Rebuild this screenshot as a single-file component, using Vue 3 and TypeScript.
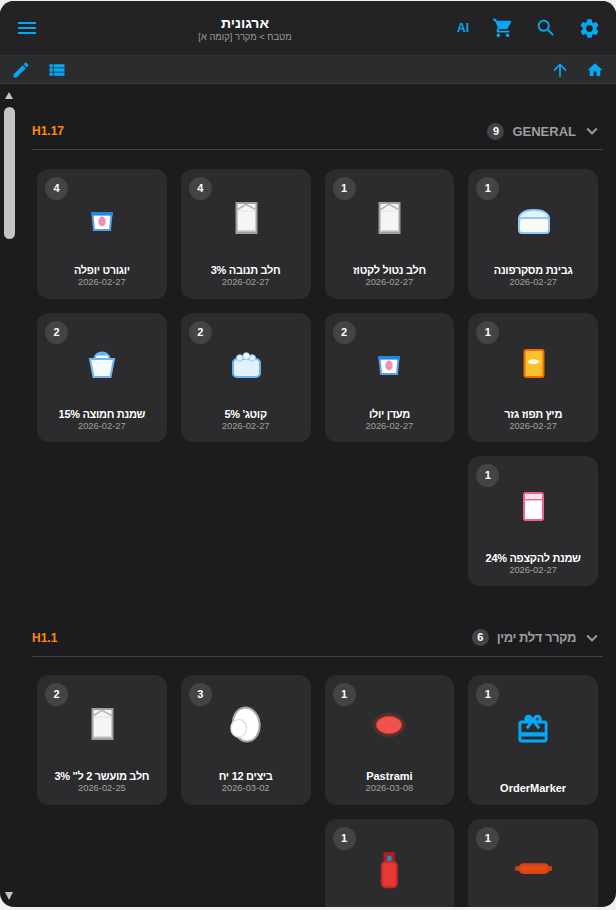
<script setup lang="ts">
interface Item {
  name: string
  date?: string
  count: number
  icon: string
}

interface Section {
  code: string
  title: string
  count: number
  items: Item[]
}

const sections: Section[] = [
  {
    code: 'H1.17',
    title: 'GENERAL',
    count: 9,
    items: [
      { name: 'גבינת מסקרפונה', date: '2026-02-27', count: 1, icon: 'cheese' },
      { name: 'חלב נטול לקטוז', date: '2026-02-27', count: 1, icon: 'milk' },
      { name: 'חלב תנובה 3%', date: '2026-02-27', count: 4, icon: 'milk' },
      { name: 'יוגורט יופלה', date: '2026-02-27', count: 4, icon: 'yogurt' },
      { name: 'מיץ תפוז גזר', date: '2026-02-27', count: 1, icon: 'juice' },
      { name: 'מעדן יולו', date: '2026-02-27', count: 2, icon: 'yogurt' },
      { name: "קוטג' 5%", date: '2026-02-27', count: 2, icon: 'cottage' },
      { name: 'שמנת חמוצה 15%', date: '2026-02-27', count: 2, icon: 'sour' },
      { name: 'שמנת להקצפה 24%', date: '2026-02-27', count: 1, icon: 'cream' },
    ],
  },
  {
    code: 'H1.1',
    title: 'מקרר דלת ימין',
    count: 6,
    items: [
      { name: 'OrderMarker', count: 1, icon: 'gift' },
      { name: 'Pastrami', date: '2026-03-08', count: 1, icon: 'pastrami' },
      { name: 'ביצים 12 יח', date: '2026-03-02', count: 3, icon: 'egg' },
      { name: 'חלב מועשר 2 ל" 3%', date: '2026-02-25', count: 2, icon: 'milk' },
      { name: '', count: 1, icon: 'sausage' },
      { name: '', count: 1, icon: 'bottle' },
    ],
  },
]

function isHebrew(text: string) {
  return /[\u0590-\u05ff]/.test(text)
}
</script>

<template>
  <div class="frame" dir="rtl">
    <header class="top-bar">
      <button class="icon-btn">
        <svg width="23" height="23" viewBox="0 0 24 24"><path d="M19.14 12.94c.04-.3.06-.61.06-.94 0-.32-.02-.64-.07-.94l2.03-1.58c.18-.14.23-.41.12-.61l-1.92-3.32c-.12-.22-.37-.29-.59-.22l-2.39.96c-.5-.38-1.03-.7-1.62-.94l-.36-2.54c-.04-.24-.24-.41-.48-.41h-3.84c-.24 0-.43.17-.47.41l-.36 2.54c-.59.24-1.13.57-1.62.94l-2.39-.96c-.22-.08-.47 0-.59.22L2.74 8.87c-.12.21-.08.47.12.61l2.03 1.58c-.05.3-.09.63-.09.94s.02.64.07.94l-2.03 1.58c-.18.14-.23.41-.12.61l1.92 3.32c.12.22.37.29.59.22l2.39-.96c.5.38 1.03.7 1.62.94l.36 2.54c.05.24.24.41.48.41h3.84c.24 0 .44-.17.47-.41l.36-2.54c.59-.24 1.13-.56 1.62-.94l2.39.96c.22.08.47 0 .59-.22l1.92-3.32c.12-.22.07-.47-.12-.61l-2.01-1.58zM12 15.6c-1.98 0-3.6-1.62-3.6-3.6s1.62-3.6 3.6-3.6 3.6 1.62 3.6 3.6-1.62 3.6-3.6 3.6z" /></svg>
      </button>
      <button class="icon-btn">
        <svg width="22" height="22" viewBox="0 0 24 24"><path d="M15.5 14h-.79l-.28-.27C15.41 12.59 16 11.11 16 9.5 16 5.91 13.09 3 9.5 3S3 5.91 3 9.5 5.91 16 9.5 16c1.61 0 3.09-.59 4.23-1.57l.27.28v.79l5 4.99L20.49 19l-4.99-5zm-6 0C7.01 14 5 11.99 5 9.5S7.01 5 9.5 5 14 7.01 14 9.5 11.99 14 9.5 14z" /></svg>
      </button>
      <button class="icon-btn">
        <svg width="22" height="22" viewBox="0 0 24 24"><path d="M7 18c-1.1 0-1.99.9-1.99 2S5.9 22 7 22s2-.9 2-2-.9-2-2-2zM1 2v2h2l3.6 7.59-1.35 2.45c-.16.28-.25.61-.25.96 0 1.1.9 2 2 2h12v-2H7.42c-.14 0-.25-.11-.25-.25l.03-.12.9-1.63h7.45c.75 0 1.41-.41 1.75-1.03l3.58-6.47c.08-.14.12-.31.12-.48 0-.55-.45-1-1-1H5.21l-.94-2H1zm16 16c-1.1 0-1.99.9-1.99 2s.89 2 1.99 2 2-.9 2-2-.9-2-2-2z" /></svg>
      </button>
      <button class="icon-btn ai-btn">AI</button>
      <div class="title-block">
        <div class="title">ארגונית</div>
        <div class="subtitle">מטבח &gt; מקרר [קומה א]</div>
      </div>
      <button class="icon-btn">
        <svg width="24" height="24" viewBox="0 0 24 24"><path d="M3 18h18v-2H3v2zm0-5h18v-2H3v2zm0-7v2h18V6H3z" /></svg>
      </button>
    </header>

    <div class="tool-bar">
      <button class="icon-btn tool-btn">
        <svg width="18" height="18" viewBox="0 0 24 24"><path d="M10 20v-6h4v6h5v-8h3L12 3 2 12h3v8z" /></svg>
      </button>
      <button class="icon-btn tool-btn">
        <svg width="20" height="20" viewBox="0 0 24 24"><path d="M4 12l1.41 1.41L11 7.83V20h2V7.83l5.58 5.59L20 12l-8-8-8 8z" /></svg>
      </button>
      <div class="spacer"></div>
      <button class="icon-btn tool-btn">
        <svg width="20" height="20" viewBox="0 0 24 24"><path d="M3 14h4v-4H3v4zm0 5h4v-4H3v4zM3 9h4V5H3v4zm5 5h13v-4H8v4zm0 5h13v-4H8v4zM8 5v4h13V5H8z" /></svg>
      </button>
      <button class="icon-btn tool-btn">
        <svg width="20" height="20" viewBox="0 0 24 24"><path d="M3 17.25V21h3.75L17.81 9.94l-3.75-3.75L3 17.25zM20.71 7.04c.39-.39.39-1.02 0-1.41l-2.34-2.34c-.39-.39-1.02-.39-1.41 0l-1.83 1.83 3.75 3.75 1.83-1.83z" /></svg>
      </button>
    </div>

    <div class="main">
      <main class="content">
        <section v-for="section in sections" :key="section.code" class="section">
          <div class="section-head">
            <svg class="chevron" width="22" height="22" viewBox="0 0 24 24"><path d="M16.59 8.59L12 13.17 7.41 8.59 6 10l6 6 6-6z" /></svg>
            <span class="section-title" :class="{ he: isHebrew(section.title) }">{{ section.title }}</span>
            <span class="section-count">{{ section.count }}</span>
            <span class="section-code">{{ section.code }}</span>
          </div>

          <div class="grid">
            <div v-for="(item, i) in section.items" :key="i" class="card">
              <span class="badge">{{ item.count }}</span>

              <svg class="art" width="48" height="48" viewBox="0 0 48 48">
                <g v-if="item.icon === 'milk'">
                  <rect x="14.5" y="9" width="20" height="30" fill="#f5f5f5" stroke="#a0a0a0" stroke-width="2" />
                  <path d="M15.5 15.5l8.500-5.200 9.500 5.200" fill="none" stroke="#b5b5b5" stroke-width="1.600" />
                  <rect x="15.5" y="16.500" width="18" height="1" fill="#e4e4e4" />
                  <rect x="15.5" y="36.500" width="18" height="1.500" fill="#bdbdbd" />
                </g>
                <g v-else-if="item.icon === 'yogurt'">
                  <path d="M14.5 20h19l-1.5 16h-16z" fill="#fff" stroke="#5a9fe6" stroke-width="2" />
                  <rect x="13" y="18" width="22" height="3.6" fill="#1e88e5" />
                  <ellipse cx="24" cy="27.5" rx="3.6" ry="5" fill="#f48fb1" />
                </g>
                <g v-else-if="item.icon === 'cheese'">
                  <path d="M10 25c0-6 6.500-9 15-9s15 3 15 9z" fill="#e3f2fd" stroke="#90caf9" stroke-width="2" />
                  <rect x="10" y="24" width="30" height="15" rx="3" fill="#fafafa" stroke="#90caf9" stroke-width="2" />
                </g>
                <g v-else-if="item.icon === 'juice'">
                  <rect x="15.500" y="12" width="19" height="27" rx="2" fill="#fbc02d" stroke="#ef6c00" stroke-width="2" />
                  <ellipse cx="24.500" cy="23.700" rx="5.500" ry="2.500" fill="#fff8e1" />
                </g>
                <g v-else-if="item.icon === 'cottage'">
                  <rect x="11" y="21" width="27" height="18" rx="4" fill="#e3f2fd" stroke="#64b5f6" stroke-width="2" />
                  <circle cx="17.800" cy="20" r="3.300" fill="#e3f2fd" stroke="#90caf9" />
                  <circle cx="30.200" cy="20" r="3.300" fill="#e3f2fd" stroke="#90caf9" />
                  <circle cx="24.300" cy="18.200" r="3.500" fill="#f5faff" stroke="#90caf9" />
                </g>
                <g v-else-if="item.icon === 'sour'">
                  <path d="M16.500 21c0-4 3.500-6.500 7.500-6.500s7.500 2.500 7.500 6.500z" fill="#f5faff" stroke="#64b5f6" stroke-width="2" />
                  <path d="M17.500 17.500c1.500-2 3.800-3 6.500-3s5 1 6.500 3z" fill="#64b5f6" />
                  <path d="M12 21h24l-3.500 18h-17z" fill="#f5faff" stroke="#74b4ee" stroke-width="2" />
                </g>
                <g v-else-if="item.icon === 'cream'">
                  <rect x="15" y="12" width="19" height="27" rx="2" fill="#fff" stroke="#f06292" stroke-width="2" />
                  <rect x="16" y="13" width="17" height="5" fill="#fce4ec" />
                  <rect x="16" y="18" width="17" height="1.400" fill="#f06292" />
                </g>
                <g v-else-if="item.icon === 'gift'" transform="translate(6.500 11.800) scale(1.458)" fill="#03a9f4">
                  <path d="M20 6h-2.180c.11-.31.180-.650.180-1 0-1.660-1.340-3-3-3-1.050 0-1.960.540-2.500 1.350l-.5.670-.5-.680C10.960 2.540 10.050 2 9 2 7.340 2 6 3.340 6 5c0 .350.070.690.180 1H4c-1.110 0-1.990.890-1.990 2L2 19c0 1.110.890 2 2 2h16c1.110 0 2-.890 2-2V8c0-1.110-.890-2-2-2zm-5-2c.550 0 1 .450 1 1s-.450 1-1 1-1-.450-1-1 .450-1 1-1zM20 19H4v-2h16v2zm0-5H4V8h5.080L7 10.830 8.620 12 11 8.760l1-1.360 1 1.360L15.380 12 17 10.830 14.920 8H20v6z" />
                  <circle cx="9" cy="5" r="1.400" />
                </g>
                <g v-else-if="item.icon === 'pastrami'">
                  <ellipse cx="24" cy="25" rx="16.500" ry="12.500" fill="#4b302e" />
                  <ellipse cx="24" cy="25" rx="12.800" ry="8.700" fill="#ef5350" stroke="#d32f2f" />
                </g>
                <g v-else-if="item.icon === 'egg'">
                  <ellipse cx="24.200" cy="24.500" rx="13.400" ry="17" fill="#fff" stroke="#a8a8a8" stroke-width="2" transform="rotate(-8 24.200 24.500)" />
                  <ellipse cx="16.800" cy="28.300" rx="7.800" ry="8.800" fill="#fff" stroke="#e0e0e0" stroke-width="1.500" />
                </g>
                <g v-else-if="item.icon === 'sausage'">
                  <rect x="6.300" y="22.200" width="36.700" height="4.600" fill="#c84312" />
                  <rect x="9.500" y="19.300" width="31" height="10.700" rx="5" fill="#d84315" />
                  <rect x="12" y="22" width="26" height="5" rx="2.500" fill="#e64a19" />
                </g>
                <g v-else-if="item.icon === 'bottle'">
                  <rect x="18.500" y="8.300" width="11.300" height="10" fill="#b71c1c" />
                  <rect x="22.200" y="11.700" width="4.300" height="6" fill="#039be5" />
                  <rect x="16.800" y="17.700" width="15" height="25.600" rx="4" fill="#e53935" stroke="#c62828" stroke-width="2" />
                </g>
              </svg>

              <div v-if="item.name" class="card-text">
                <div class="card-name" :class="{ he: isHebrew(item.name) }">{{ item.name }}</div>
                <div v-if="item.date" class="card-date">{{ item.date }}</div>
              </div>
            </div>
          </div>
        </section>
      </main>

      <div class="scrollbar">
        <span class="arrow-up"></span>
        <span class="thumb"></span>
        <span class="arrow-down"></span>
      </div>
    </div>
  </div>
</template>

<style>
html,
body {
  background: #f0f0f0;
  overflow: hidden;
}
</style>

<style scoped>
.frame {
  box-sizing: border-box;
  display: flex;
  flex-direction: column;
  height: 906px;
  margin-top: 1px;
  border-radius: 14px;
  overflow: hidden;
  background: #1c1c1e;
  font-family: 'Liberation Sans', Arial, sans-serif;
  color: #fff;
}

.top-bar {
  box-sizing: border-box;
  flex: none;
  display: flex;
  align-items: center;
  gap: 19px;
  height: 55px;
  padding: 0 15px;
  background: #232325;
  border-bottom: 1px solid #333335;
}

.tool-bar {
  box-sizing: border-box;
  flex: none;
  display: flex;
  align-items: center;
  gap: 16px;
  height: 28px;
  padding: 0 12.5px 0 11px;
  background: #2c2c2e;
  border-bottom: 1px solid #3c3c3e;
}

.spacer {
  flex: 1;
}

.icon-btn {
  display: flex;
  align-items: center;
  justify-content: center;
  width: 24px;
  padding: 0;
  border: none;
  background: transparent;
  color: #03a9f4;
  fill: #03a9f4;
  cursor: pointer;
}

.tool-btn {
  width: auto;
}

.ai-btn {
  width: 18px;
  font-family: inherit;
  font-size: 12px;
  font-weight: 700;
}

.title-block {
  flex: 1;
  padding: 2px 3px 0 0;
  text-align: center;
}

.title {
  font-size: 14px;
  line-height: 17px;
  font-weight: 700;
}

.subtitle {
  font-size: 9.35px;
  line-height: 11px;
  color: #a09a90;
}

.main {
  flex: 1;
  min-height: 0;
  display: flex;
}

.content {
  flex: 1;
  min-width: 0;
  padding: 28.4px 13px 0 16px;
}

.section + .section {
  margin-top: 32.3px;
}

.section-head {
  box-sizing: border-box;
  display: flex;
  align-items: center;
  height: 38px;
  padding-top: 1px;
  border-bottom: 1px solid #444;
}

.chevron {
  fill: #9e9e9e;
  margin-left: 5px;
}

.section-title {
  font-size: 13px;
  font-weight: 700;
  color: #9e9e9e;
}

.section-title.he {
  letter-spacing: -0.45px;
}

.section-count {
  width: 17px;
  height: 17px;
  margin-right: 8px;
  border-radius: 50%;
  background: #444;
  font-size: 11px;
  font-weight: 700;
  line-height: 17px;
  text-align: center;
}

.section-code {
  margin-right: auto;
  font-size: 12px;
  font-weight: 700;
  color: #ff8c00;
}

.grid {
  display: grid;
  grid-template-columns: repeat(4, 1fr);
  gap: 14px;
  margin-top: 18.6px;
  padding: 0 5px;
}

.card {
  position: relative;
  box-sizing: border-box;
  display: flex;
  flex-direction: column;
  align-items: center;
  aspect-ratio: 1;
  padding: 25px 0 10px;
  border-radius: 12px;
  background: #2c2c2e;
}

.badge {
  position: absolute;
  top: 8px;
  left: 8px;
  width: 23px;
  height: 23px;
  border-radius: 50%;
  background: #444;
  font-size: 11px;
  font-weight: 700;
  line-height: 23px;
  text-align: center;
}

.art {
  flex: none;
}

.card-text {
  margin-top: auto;
  text-align: center;
}

.card-name {
  font-size: 11px;
  line-height: 13px;
  font-weight: 700;
  white-space: nowrap;
}

.card-name.he {
  letter-spacing: -0.3px;
}

.card-date {
  font-size: 9.35px;
  line-height: 11.5px;
  color: #a0a0a0;
}

.scrollbar {
  flex: none;
  display: flex;
  flex-direction: column;
  align-items: center;
  width: 16px;
  margin-left: 1px;
  padding: 8px 0 7px;
  margin-right: -1px;
  box-sizing: border-box;
}

.arrow-up,
.arrow-down {
  width: 0;
  height: 0;
  border-left: 4.5px solid transparent;
  border-right: 4.5px solid transparent;
}

.arrow-up {
  border-bottom: 7px solid #c4c4c4;
}

.arrow-down {
  margin-top: auto;
  border-top: 8px solid #c4c4c4;
}

.thumb {
  width: 11px;
  height: 132px;
  margin-top: 8px;
  border-radius: 6px;
  background: #c4c4c4;
}
</style>
